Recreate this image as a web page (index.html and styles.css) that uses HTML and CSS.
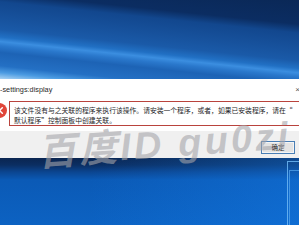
FILE: index.html
```html
<!DOCTYPE html>
<html lang="zh-CN">
<head>
<meta charset="utf-8">
<title>display</title>
<link rel="stylesheet" href="styles.css">
</head>
<body>
<div class="screen">
  <div class="desk-top"></div>
  <div class="dialog">
    <div class="dlg-head">
      <span class="path">-settings:display</span>
      <span class="close">×</span>
    </div>
    <div class="dlg-body">
      <div class="err-icon">
        <svg viewBox="0 0 16 16" width="15" height="15">
          <circle cx="8" cy="8" r="8" fill="#e0463a"/>
          <path d="M5 5 L11 11 M11 5 L5 11" stroke="#fff" stroke-width="1.6" stroke-linecap="round"/>
        </svg>
      </div>
      <div class="msg">
        <p class="msg-line">该文件没有与之关联的程序来执行该操作。请安装一个程序，或者，如果已安装程序，请在“</p>
        <p class="msg-line">默认程序”控制面板中创建关联。</p>
      </div>
    </div>
    <div class="dlg-foot">
      <button class="btn">确定</button>
    </div>
  </div>
  <div class="desk-bottom">
    <div class="win-edge"><div class="win-edge-inner"></div></div>
  </div>
  <div class="watermark">百度ID gu0zi</div>
</div>
</body>
</html>
```
FILE: styles.css
```css
html, body {
  margin: 0;
  padding: 0;
  width: 299px;
  height: 225px;
  overflow: hidden;
  background: #0b3570;
}
.screen {
  position: relative;
  width: 299px;
  height: 225px;
  overflow: hidden;
  display: flex;
  flex-direction: column;
  font-family: "Noto Sans CJK SC", "Liberation Sans", sans-serif;
}
.desk-top {
  height: 79px;
  flex: none;
  background:
    linear-gradient(186deg,
      #0a2857 0%, #0b2d62 22%, #12478e 30%, #17529d 45%, #1a5aa8 55%,
      #2170c4 62%, #3b8ee0 66%, #2a78cc 70%, #1d63b5 76%, #2470c4 88%,
      #4b9be2 94%, #a9d2f3 100%);
}
.dialog {
  flex: none;
  background: #ffffff;
  display: flex;
  flex-direction: column;
}
.dlg-head {
  height: 20px;
  display: flex;
  align-items: center;
  justify-content: space-between;
}
.path {
  font-family: "Liberation Sans", sans-serif;
  font-size: 7.3px;
  color: #2a2a2a;
}
.close {
  font-family: "Liberation Sans", sans-serif;
  font-size: 8px;
  color: #555;
  margin-right: -1px;
}
.dlg-body {
  height: 32px;
  display: flex;
  align-items: flex-start;
  padding-top: 2px;
  box-sizing: border-box;
}
.err-icon {
  margin-left: -8px;
  margin-top: 2px;
  width: 15px;
  height: 15px;
  flex: none;
}
.err-icon svg { display: block; }
.msg {
  margin-left: 2px;
  margin-right: -20px;
  flex: 1;
  border: 1.5px solid #b9433d;
  padding: 3px 0 0 4px;
  height: 20px;
  overflow: hidden;
  white-space: nowrap;
}
.msg-line {
  margin: 0;
  font-size: 6.8px;
  line-height: 10px;
  color: #1e1e28;
}
.dlg-foot {
  height: 27px;
  background: #f0f0f0;
  display: flex;
  justify-content: flex-end;
  align-items: flex-start;
  padding-top: 10px;
  box-sizing: border-box;
  padding-right: 4px;
}
.btn {
  width: 34px;
  height: 13px;
  padding: 0;
  margin: 0;
  border: 1px solid #4a7fb5;
  background: #e3e3e3;
  box-shadow: inset 0 0 0 1px #f4f4f4;
  font-family: "Noto Sans CJK SC", sans-serif;
  font-size: 6.5px;
  line-height: 11px;
  color: #222;
}
.desk-bottom {
  flex: 1;
  position: relative;
  background:
    linear-gradient(90deg, rgba(20,110,220,0) 30%, rgba(20,125,235,0.4) 100%),
    linear-gradient(180deg, #0a2550 0px, #0b2e62 7px, #0b4590 14px, #0b5ab6 22px, #0c62c2 100%);
}
.win-edge {
  position: absolute;
  left: 287px;
  top: 3px;
  right: -5px;
  bottom: -5px;
  border-left: 1.5px solid rgba(110,185,245,0.85);
  border-top: 1.5px solid rgba(110,185,245,0.85);
}
.win-edge-inner {
  position: absolute;
  left: 1px;
  top: 8px;
  right: 0;
  bottom: 0;
  border-left: 1px solid rgba(90,170,240,0.7);
  border-top: 1px solid rgba(90,170,240,0.7);
}
.watermark {
  position: absolute;
  left: 38px;
  top: 131px;
  font-family: "Liberation Sans", "Noto Sans CJK SC", sans-serif;
  font-weight: bold;
  font-style: italic;
  font-size: 38px;
  line-height: 44px;
  letter-spacing: 3.2px;
  color: rgba(165,165,170,0.6);
  white-space: nowrap;
  transform: rotate(-4deg);
  transform-origin: left center;
}
```
